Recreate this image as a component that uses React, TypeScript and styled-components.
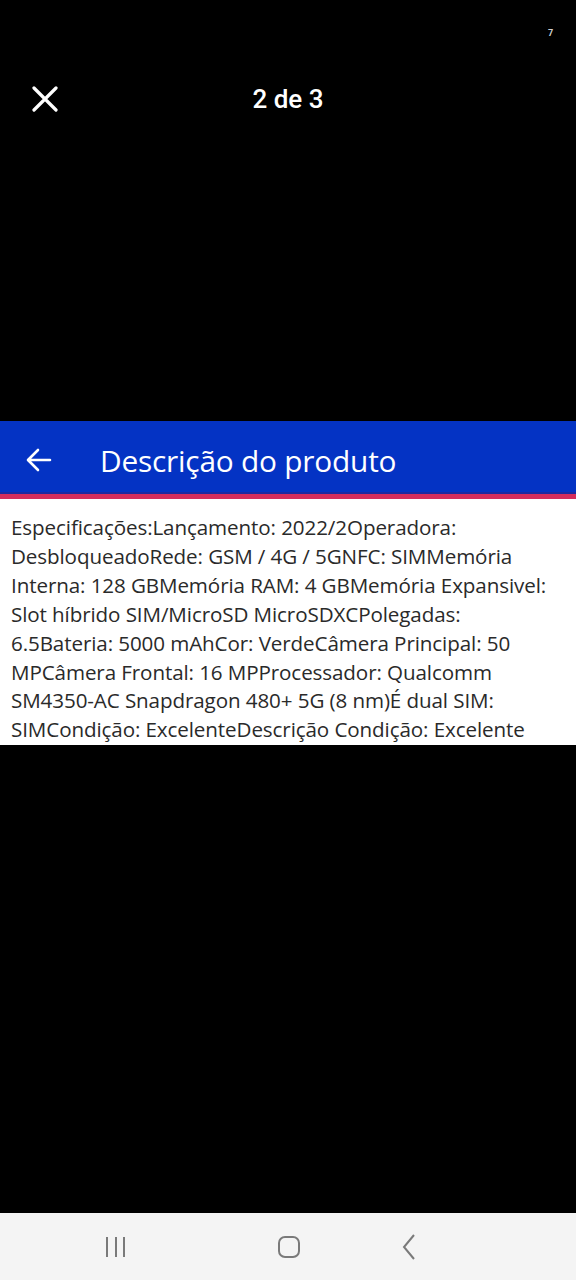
import React from "react";
import styled, { createGlobalStyle } from "styled-components";

const Global = createGlobalStyle`
  html, body { margin: 0; padding: 0; background: #000; }
  #root { width: 576px; height: 1280px; }
`;

const Screen = styled.div`
  width: 576px;
  height: 1280px;
  background: #000;
  display: flex;
  flex-direction: column;
  position: relative;
  overflow: hidden;
`;

const StatusMark = styled.span`
  position: absolute;
  top: 28px;
  left: 548px;
  color: #cfcfcf;
  font: 700 9px "Roboto", sans-serif;
`;

const TopBar = styled.div`
  height: 80px;
  margin-top: 59px;
  display: flex;
  align-items: center;
  position: relative;
`;

const CloseBtn = styled.div`
  position: absolute;
  left: 31px;
  top: 26px;
  width: 28px;
  height: 28px;
  display: flex;
  align-items: center;
  justify-content: center;
`;

const Counter = styled.div`
  flex: 1;
  text-align: center;
  color: #fff;
  font: 500 26px "Roboto", sans-serif;
`;

const Spacer = styled.div`
  height: 282px;
`;

const Header = styled.div`
  height: 73px;
  background: #0433c4;
  border-bottom: 2px solid #1c2aa0;
  display: flex;
  align-items: center;
  padding-left: 26px;
  padding-top: 7px;
  box-sizing: border-box;
  gap: 48px;
`;

const Title = styled.div`
  color: #fff;
  font: 400 29.8px "Open Sans", sans-serif;
  letter-spacing: -0.2px;
`;

const Stripe = styled.div`
  height: 5px;
  background: #d52d5c;
`;

const Content = styled.div`
  background: #fff;
  padding: 14px 6px 1px 11px;
  color: #2a2a2a;
  font: 400 20.6px/28.9px "Open Sans", sans-serif;
  letter-spacing: -0.1px;
  white-space: nowrap;
`;

const Filler = styled.div`
  flex: 1;
`;

const NavBar = styled.div`
  height: 67px;
  background: #f4f4f4;
  display: flex;
  align-items: center;
  padding-left: 101px;
`;

const NavIcon = styled.div<{ $gap: number }>`
  width: 30px;
  height: 30px;
  margin-right: ${(p) => p.$gap}px;
  display: flex;
  align-items: center;
  justify-content: center;
`;

const lines = [
  "Especificações:Lançamento: 2022/2Operadora:",
  "DesbloqueadoRede: GSM / 4G / 5GNFC: SIMMemória",
  "Interna: 128 GBMemória RAM: 4 GBMemória Expansivel:",
  "Slot híbrido SIM/MicroSD MicroSDXCPolegadas:",
  "6.5Bateria: 5000 mAhCor: VerdeCâmera Principal: 50",
  "MPCâmera Frontal: 16 MPProcessador: Qualcomm",
  "SM4350-AC Snapdragon 480+ 5G (8 nm)É dual SIM:",
  "SIMCondição: ExcelenteDescrição Condição: Excelente",
];

export default function App() {
  return (
    <>
      <Global />
      <Screen>
        <StatusMark>7</StatusMark>
        <TopBar>
          <CloseBtn>
            <svg width="26" height="26" viewBox="0 0 26 26">
              <path d="M2 2 L24 24 M24 2 L2 24" stroke="#fff" strokeWidth="3.2" strokeLinecap="round" />
            </svg>
          </CloseBtn>
          <Counter>2 de 3</Counter>
        </TopBar>
        <Spacer />
        <Header>
          <svg width="26" height="24" viewBox="0 0 26 24">
            <path d="M24 12 H3 M12 2 L2 12 L12 22" stroke="#fff" strokeWidth="2.6" fill="none" strokeLinecap="round" strokeLinejoin="round" />
          </svg>
          <Title>Descrição do produto</Title>
        </Header>
        <Stripe />
        <Content>
          {lines.map((l, i) => (
            <div key={i}>{l}</div>
          ))}
        </Content>
        <Filler />
        <NavBar>
          <NavIcon $gap={143}>
            <svg width="22" height="24" viewBox="0 0 22 24">
              <path d="M2 2 V22 M11 2 V22 M19 2 V22" stroke="#7a7a7a" strokeWidth="2" />
            </svg>
          </NavIcon>
          <NavIcon $gap={90}>
            <svg width="24" height="24" viewBox="0 0 24 24">
              <rect x="2" y="2" width="20" height="20" rx="6" stroke="#7a7a7a" strokeWidth="2" fill="none" />
            </svg>
          </NavIcon>
          <NavIcon $gap={0}>
            <svg width="16" height="26" viewBox="0 0 16 26">
              <path d="M13 1 L3 13 L13 25" stroke="#7a7a7a" strokeWidth="2" fill="none" />
            </svg>
          </NavIcon>
        </NavBar>
      </Screen>
    </>
  );
}
